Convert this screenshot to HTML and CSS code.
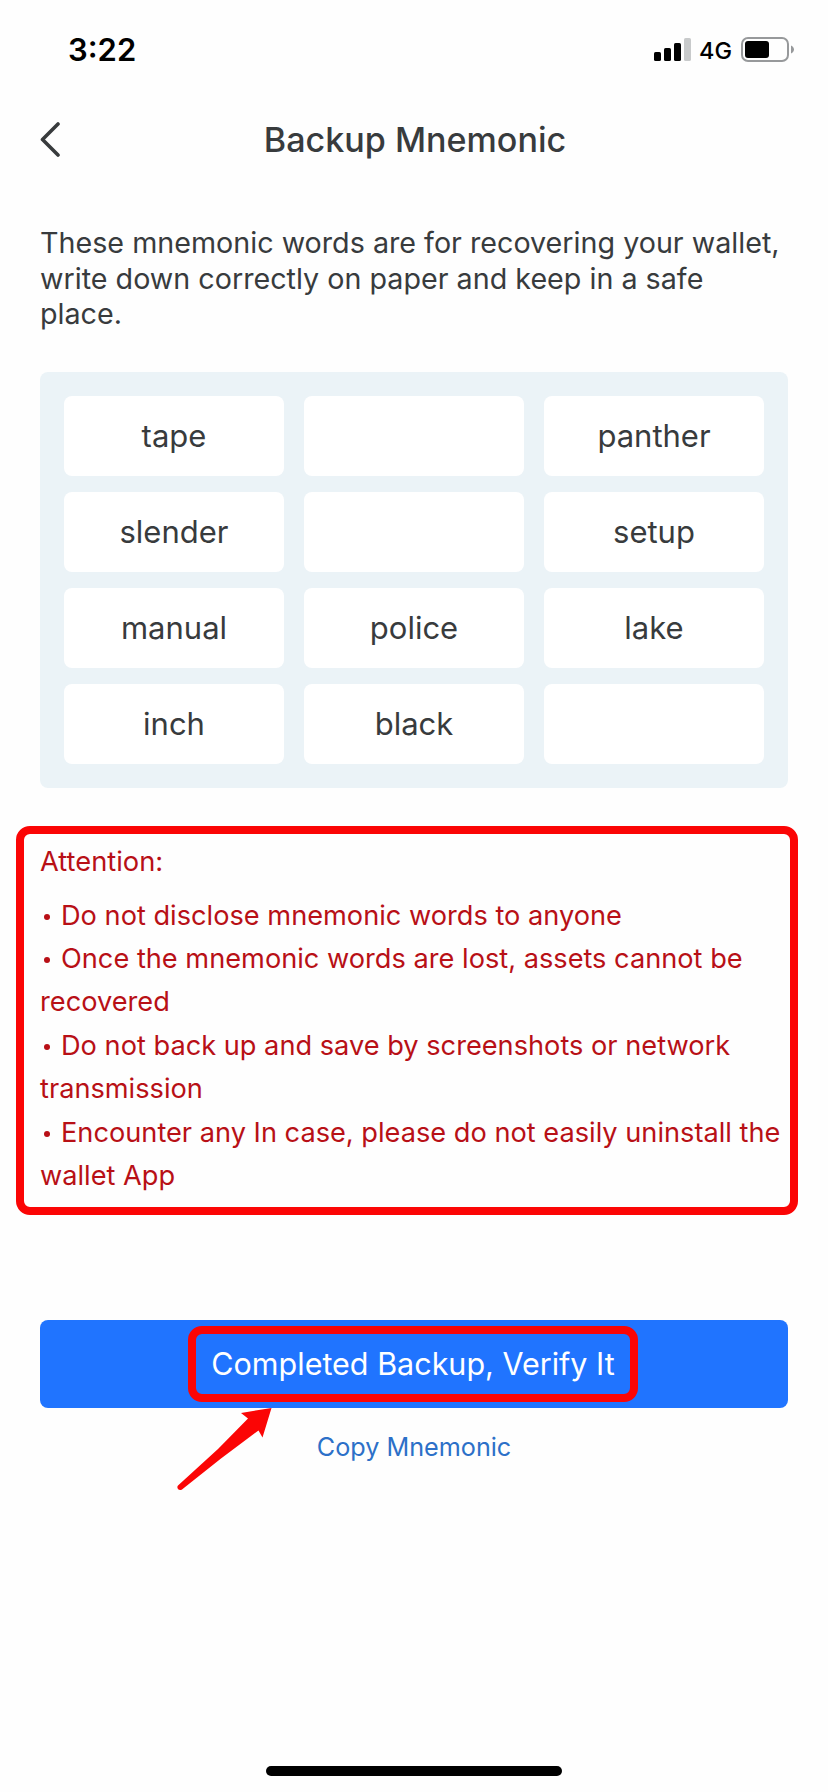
FILE: index.html
```html
<!DOCTYPE html>
<html lang="en">
<head>
<meta charset="utf-8">
<title>Backup Mnemonic</title>
<link rel="stylesheet" href="styles.css">
</head>
<body>
<div class="screen">
  <header class="status">
    <span class="time">3:22</span>
    <div class="indicators">
      <svg class="signal" width="38" height="24" viewBox="0 0 38 24">
        <rect x="0" y="14" width="7" height="9" rx="1.6"/>
        <rect x="10" y="10" width="7" height="13" rx="1.6"/>
        <rect x="20" y="5" width="7" height="18" rx="1.6"/>
        <rect x="30" y="0" width="7" height="23" rx="1.6" fill="#c8cacb"/>
      </svg>
      <span class="network">4G</span>
      <svg class="battery" width="54" height="26" viewBox="0 0 54 26">
        <rect x="1" y="1" width="46" height="23" rx="6" fill="none" stroke="#97999b" stroke-width="2"/>
        <rect x="4" y="4" width="24" height="17" rx="3"/>
        <path d="M50 8.500C52 9.500 53 11 53 12.500S52 15.500 50 16.500Z" fill="#97999b"/>
      </svg>
    </div>
  </header>
  <nav class="navbar">
    <svg class="back" width="22" height="38" viewBox="0 0 22 38"><path d="M18 3 2.500 18.500 18 34" fill="none" stroke="#383b3d" stroke-width="3.600" stroke-linecap="round" stroke-linejoin="round"/></svg>
    <h1 class="title">Backup Mnemonic</h1>
  </nav>
  <main class="content">
    <p class="intro">These mnemonic words are for recovering your wallet,<br>write down correctly on paper and keep in a safe<br>place.</p>
    <section class="words">
      <div class="word">tape</div><div class="word"></div><div class="word">panther</div>
      <div class="word">slender</div><div class="word"></div><div class="word">setup</div>
      <div class="word">manual</div><div class="word">police</div><div class="word">lake</div>
      <div class="word">inch</div><div class="word">black</div><div class="word"></div>
    </section>
    <section class="attention">
      <h2 class="attention-title">Attention:</h2>
      <ul class="notes">
        <li><i class="dot"></i>Do not disclose mnemonic words to anyone</li>
        <li><i class="dot"></i>Once the mnemonic words are lost, assets cannot be<br>recovered</li>
        <li><i class="dot"></i>Do not back up and save by screenshots or network<br>transmission</li>
        <li><i class="dot"></i>Encounter any In case, please do not easily uninstall the<br>wallet App</li>
      </ul>
    </section>
    <div class="actions">
      <button class="verify"><span class="verify-label">Completed Backup, Verify It</span></button>
      <svg class="arrow" width="98" height="86" viewBox="0 0 98 86"><path d="M95.500 2 65 7 72 12.500 42 43 2 79.500C0 82 3 85.500 6 83.500L45 52.500 82.500 24.500 86.500 31.500Z" fill="#fb0505"/></svg>
      <a class="copy">Copy Mnemonic</a>
    </div>
  </main>
  <div class="home"></div>
</div>
</body>
</html>
```
FILE: styles.css
```css
* { box-sizing: border-box; }
body { margin: 0; background: #fff; font-family: Inter, "Liberation Sans", sans-serif; color: #383b3d; }
h1, h2, p, ul { margin: 0; padding: 0; font-weight: 400; }
.screen { position: relative; width: 828px; height: 1792px; background: #fefefe; overflow: hidden; }
.status { display: flex; justify-content: space-between; height: 100px; padding: 30px 33px 0 68px; color: #000; }
.time { font-size: 31px; line-height: 40px; font-weight: 600; }
.indicators { display: flex; align-items: flex-start; }
.signal { margin: 8px 7px 0 0; }
.network { width: 34px; margin-right: 8px; font-size: 23.500px; line-height: 41px; font-weight: 450; white-space: nowrap; }
.battery { margin-top: 7px; }
.navbar { display: flex; align-items: center; height: 80px; padding: 0 40px; }
.back { flex: none; }
.title { flex: 1; margin-right: 20px; font-size: 34.100px; line-height: 44px; font-weight: 500; text-align: center; }
.content { padding: 0 40px; }
.intro { padding-top: 45px; font-size: 28.700px; line-height: 35.700px; white-space: nowrap; }
.words { display: grid; grid-template-columns: repeat(3, 220px); grid-auto-rows: 80px; gap: 16px 20px; margin-top: 40px; padding: 24px; background: #ebf3f7; border-radius: 8px; }
.word { display: flex; align-items: center; justify-content: center; padding-bottom: 2px; background: #fff; border-radius: 8px; font-size: 31px; }
.attention { width: 782px; height: 389px; margin: 38px 0 0 -24px; padding: 6px 0 0 16px; border: 8px solid #fb0505; border-radius: 14px; color: #b81016; font-size: 27.200px; line-height: 43.400px; white-space: nowrap; }
.attention-title { font-size: 27.300px; line-height: 43.400px; }
.notes { list-style: none; padding-top: 10px; }
.dot { display: inline-block; width: 6px; height: 6px; margin: 0 11px 5px 4px; border-radius: 50%; background: currentColor; }
.actions { position: relative; display: flex; flex-direction: column; align-items: center; margin-top: 105px; }
.verify { display: flex; align-items: center; justify-content: center; width: 748px; height: 88px; padding: 0; border: 0; border-radius: 8px; background: #2074ff; color: #fff; font: 400 30.500px/40px Inter, "Liberation Sans", sans-serif; }
.verify-label { display: flex; align-items: center; justify-content: center; width: 450px; height: 76px; margin-right: 2px; border: 8px solid #fb0505; border-radius: 14px; white-space: nowrap; }
.arrow { position: absolute; left: 136px; top: 86px; }
.copy { margin-top: 21px; color: #2c70c8; font-size: 25.200px; line-height: 36px; }
.home { position: absolute; left: 266px; bottom: 16px; width: 296px; height: 10px; border-radius: 5px; background: #000; }
```
